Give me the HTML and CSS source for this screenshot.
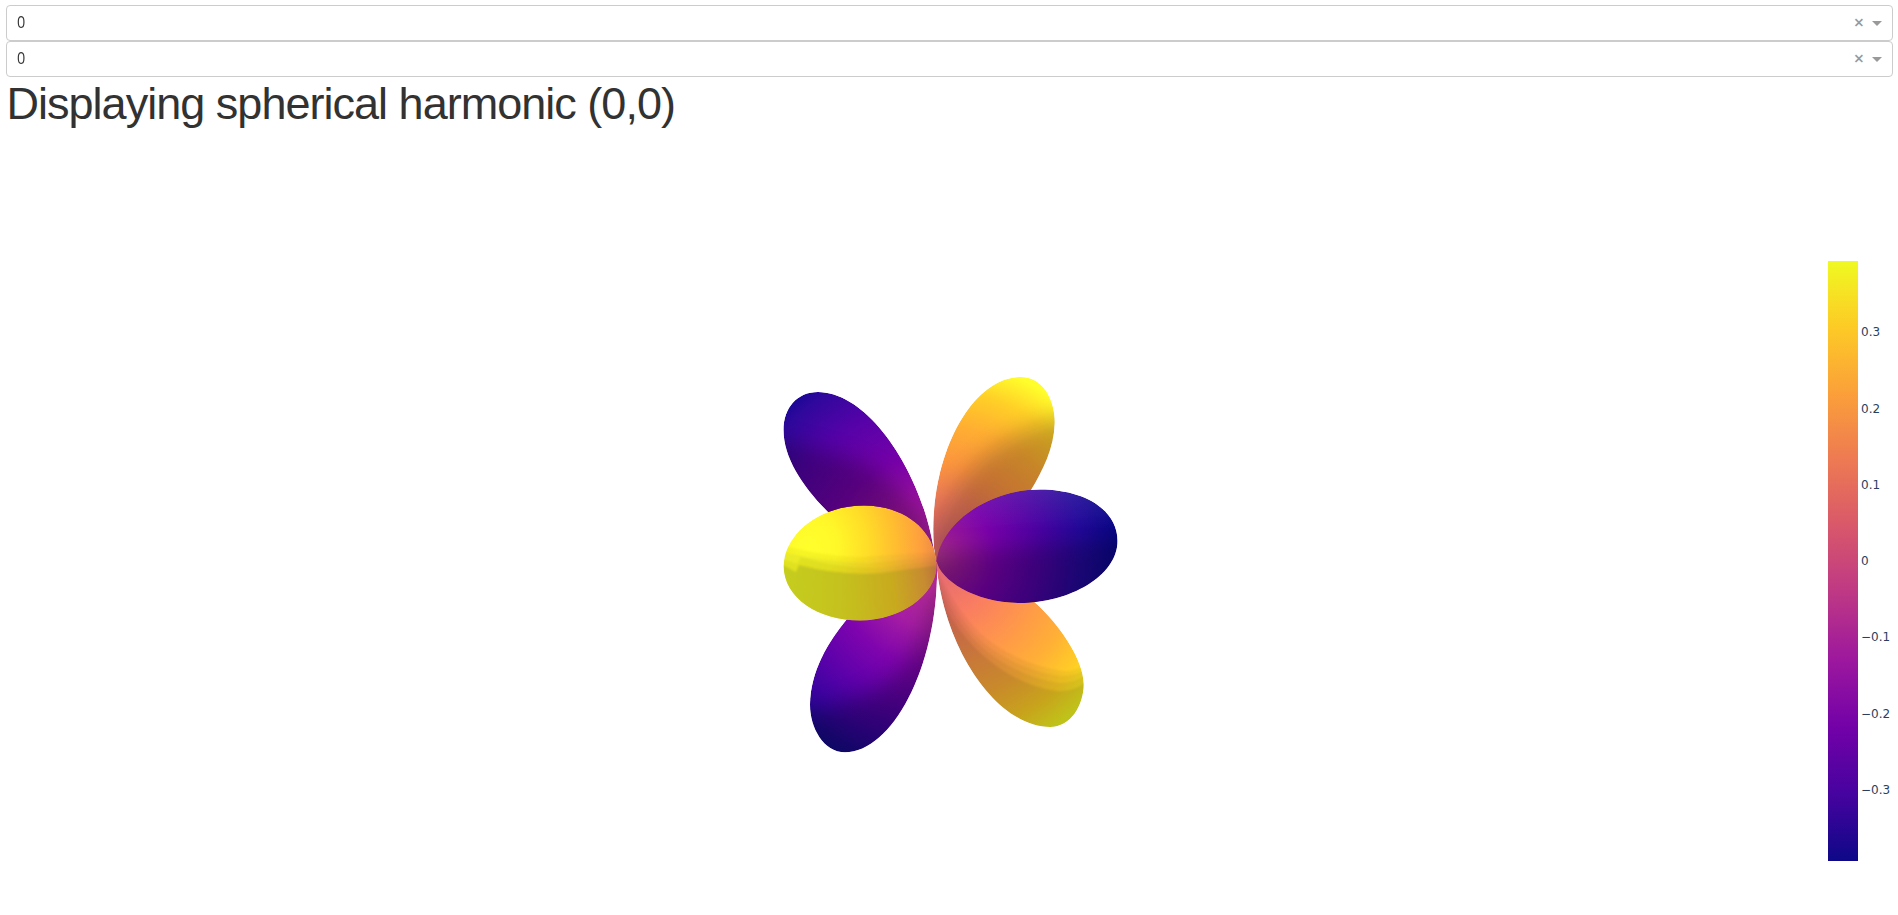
FILE: index.html
```html
<!DOCTYPE html>
<html lang="en">
<head>
<meta charset="utf-8">
<title>Spherical harmonics</title>
<link rel="stylesheet" href="styles.css">
</head>
<body>
<div class="select"><span class="value">0</span><span class="clear">×</span><span class="arrow"></span></div>
<div class="select"><span class="value">0</span><span class="clear">×</span><span class="arrow"></span></div>
<h1 class="title">Displaying spherical harmonic (0,0)</h1>
<svg class="plot" viewBox="0 130 1898 785" width="1898" height="785">
  <defs>
    <linearGradient id="plasma" x1="0" y1="1" x2="0" y2="0">
      <stop offset="0" stop-color="#0d0887"/><stop offset=".1111" stop-color="#46039f"/><stop offset=".2222" stop-color="#7201a8"/><stop offset=".3333" stop-color="#9c179e"/><stop offset=".4444" stop-color="#bd3786"/><stop offset=".5556" stop-color="#d8576b"/><stop offset=".6667" stop-color="#ed7953"/><stop offset=".7778" stop-color="#fb9f3a"/><stop offset=".8889" stop-color="#fdca26"/><stop offset="1" stop-color="#f0f921"/>
    </linearGradient>
    <radialGradient id="gUL" gradientUnits="userSpaceOnUse" cx="936" cy="560" r="215">
      <stop offset=".1" stop-color="#a32098"/><stop offset=".3" stop-color="#9a10a2"/><stop offset=".5" stop-color="#7601a9"/><stop offset=".75" stop-color="#5302a8"/><stop offset=".93" stop-color="#2f089c"/><stop offset="1" stop-color="#180796"/>
    </radialGradient>
    <radialGradient id="gUR" gradientUnits="userSpaceOnUse" cx="936" cy="560" r="208">
      <stop offset=".1" stop-color="#d66568"/><stop offset=".3" stop-color="#ee7c58"/><stop offset=".46" stop-color="#fb943f"/><stop offset=".65" stop-color="#ffae32"/><stop offset=".82" stop-color="#ffd027"/><stop offset=".96" stop-color="#fffd2b"/>
    </radialGradient>
    <radialGradient id="gLR" gradientUnits="userSpaceOnUse" cx="936" cy="560" r="215">
      <stop offset=".08" stop-color="#e76c70"/><stop offset=".28" stop-color="#fa7e60"/><stop offset=".48" stop-color="#ff984a"/><stop offset=".66" stop-color="#ffb036"/><stop offset=".82" stop-color="#ffd024"/><stop offset=".95" stop-color="#f4f820"/>
    </radialGradient>
    <radialGradient id="gLL" gradientUnits="userSpaceOnUse" cx="936" cy="570" r="215">
      <stop offset=".1" stop-color="#b52a99"/><stop offset=".27" stop-color="#a51da3"/><stop offset=".46" stop-color="#7f04ae"/><stop offset=".64" stop-color="#5e01ab"/><stop offset=".8" stop-color="#3b03a0"/><stop offset=".95" stop-color="#150a8c"/>
    </radialGradient>
    <radialGradient id="gR" gradientUnits="userSpaceOnUse" cx="936" cy="555" r="183">
      <stop offset="0" stop-color="#a8308a"/><stop offset=".13" stop-color="#981898"/><stop offset=".32" stop-color="#7801ab"/><stop offset=".57" stop-color="#4c02a3"/><stop offset=".8" stop-color="#22089a"/><stop offset="1" stop-color="#080687"/>
    </radialGradient>
    <radialGradient id="gY" gradientUnits="userSpaceOnUse" cx="0" cy="0" r="135" gradientTransform="translate(808 548) scale(1 1.1)">
      <stop offset="0" stop-color="#ffff2c"/><stop offset=".22" stop-color="#fff829"/><stop offset=".45" stop-color="#ffdc28"/><stop offset=".65" stop-color="#ffbd30"/><stop offset=".84" stop-color="#fe9f3e"/><stop offset="1" stop-color="#e4814b"/>
    </radialGradient>
    <linearGradient id="yLow" gradientUnits="userSpaceOnUse" x1="784" y1="584" x2="937" y2="560">
      <stop offset="0" stop-color="#c2cc1b"/><stop offset=".4" stop-color="#c2bd1b"/><stop offset=".7" stop-color="#c6a81f"/><stop offset=".9" stop-color="#c48a30"/><stop offset="1" stop-color="#b5703a"/>
    </linearGradient>
    <linearGradient id="sheen" x1="0" y1="0" x2="0" y2="1"><stop offset="0" stop-color="#fff" stop-opacity=".1"/><stop offset=".35" stop-color="#fff" stop-opacity="0"/></linearGradient>
    <filter id="soft" x="-30%" y="-30%" width="160%" height="160%"><feGaussianBlur stdDeviation="11"/></filter>
    <filter id="fine" x="-20%" y="-20%" width="140%" height="140%"><feGaussianBlur stdDeviation="1.2"/></filter>

    <path id="pUL" d="M936 562 L933 545 C920 470 868 392 818 392 C797 392 783.500 408 783.500 430 C783.500 458 803 487 828 512 L880 550Z"/>
    <path id="pUR" d="M936 562 L934 548 C927 460 970 377 1021 377 C1043 377 1055 400 1054.700 423 C1054 448 1043 470 1031 490 L980 550Z"/>
    <path id="pLR" d="M936 562 C945 655 1000 727 1050 727 C1071 727 1083.700 705 1083.700 684 C1083.700 660 1060 625 1035 602.500 L990 560Z"/>
    <path id="pLL" d="M937 560 C940 663 893 752.300 845 752.300 C823 752.300 810 727 810 705 C810 672 828 642 847 619 L900 560Z"/>
    <path id="pR" d="M936.500 561 C940 526 985 489.500 1040 489.500 C1085 489.500 1117.500 510 1117.500 541 C1117.500 576 1069 603 1020 603 C975 603 940 580 936.500 561Z"/>
    <path id="pY" d="M936.500 566 C936.500 531 905 505.500 864 505.500 C818 505.500 783.700 535 783.700 566 C783.700 598 818 620.500 860 620.500 C900 620.500 936.500 595 936.500 566Z"/>
    <clipPath id="cUL"><use href="#pUL"/></clipPath><clipPath id="cUR"><use href="#pUR"/></clipPath><clipPath id="cLR"><use href="#pLR"/></clipPath>
    <clipPath id="cLL"><use href="#pLL"/></clipPath><clipPath id="cR"><use href="#pR"/></clipPath><clipPath id="cY"><use href="#pY"/></clipPath>
  </defs>

  <g clip-path="url(#cUL)">
    <use href="#pUL" fill="url(#gUL)"/>
    <path d="M740 432 Q830 448 870 467 Q910 490 940 550 L930 620 L740 600Z" opacity=".26" filter="url(#soft)"/>
  </g>
  <g clip-path="url(#cUR)">
    <use href="#pUR" fill="url(#gUR)"/>
    <path d="M1085 411 Q1010 428 975 465 Q950 490 928 545 L936 600 L1100 580Z" fill="#201008" opacity=".25" filter="url(#soft)"/>
  </g>
  <g clip-path="url(#cLL)">
    <use href="#pLL" fill="url(#gLL)"/>
    <path d="M770 716 Q860 706 895 676 Q924 645 936 590 L990 590 L960 790 L770 790Z" opacity=".27" filter="url(#soft)"/>
  </g>
  <g clip-path="url(#cLR)">
    <use href="#pLR" fill="url(#gLR)"/>
    <g fill="#181400" filter="url(#fine)">
      <path d="M934 565 Q962 620 987 639 Q1020 664 1062 671 Q1078 672 1095 658 V750 H920Z" opacity=".05"/>
      <path d="M933 567 Q958 622 985 644 Q1020 671 1062 676 Q1078 676 1095 664 V750 H920Z" opacity=".05"/>
      <path d="M932 570 Q954 624 984 649 Q1020 678 1060 683 Q1077 683 1095 669 V750 H920Z" opacity=".06"/>
      <path d="M932 575 Q948 625 984 656 Q1020 687 1058 691 Q1076 692 1095 676 V750 H920Z" opacity=".08"/>
    </g>
  </g>
  <g clip-path="url(#cR)">
    <use href="#pR" fill="url(#gR)"/>
    <use href="#pR" fill="url(#sheen)"/>
    <path d="M900 555 Q1010 548 1150 534 V650 H900Z" opacity=".25" filter="url(#soft)"/>
  </g>
  <g clip-path="url(#cY)">
    <use href="#pY" fill="url(#gY)"/>
    <g fill="url(#yLow)" filter="url(#fine)">
      <path d="M775 543 Q815 556 860 557 L940 552 V630 H775Z" opacity=".16"/>
      <path d="M775 550 Q820 562 870 563 L940 556 V630 H775Z" opacity=".2"/>
      <path d="M775 556 L797 564 L801 557 Q840 569 880 568 L940 560 V630 H775Z" opacity=".25"/>
      <path d="M775 561 L796 572 L799 565 Q840 576 880 573 L940 565 V630 H775Z" opacity=".9"/>
    </g>
  </g>

  <rect x="1828" y="261" width="30" height="600" fill="url(#plasma)"/>
  <g class="ticks">
    <text x="1861" y="336">0.3</text>
    <text x="1861" y="413">0.2</text>
    <text x="1861" y="489">0.1</text>
    <text x="1861" y="565">0</text>
    <text x="1861" y="641">−0.1</text>
    <text x="1861" y="718">−0.2</text>
    <text x="1861" y="794">−0.3</text>
  </g>
</svg>
</body>
</html>
```
FILE: styles.css
```css
body {
  margin: 0;
  padding-top: 5px;
  background: #fff;
  color: #323232;
  overflow: hidden;
}

.select {
  display: flex;
  align-items: center;
  box-sizing: border-box;
  height: 36px;
  margin: 0 5px 0 6px;
  padding: 0 10px;
  border: 1px solid #ccc;
  border-radius: 4px;
  font: 16px "Open Sans", sans-serif;
  color: #333;
}

.value {
  flex: 1;
  padding-bottom: 2px;
  font-size: 16px;
  line-height: 22px;
  transform: scaleX(.9);
  transform-origin: left;
}

.clear {
  margin-right: 8px;
  padding-bottom: 2px;
  font-size: 18px;
  font-weight: 600;
  line-height: 18px;
  color: #999;
}

.arrow {
  border: 5px solid transparent;
  border-top-color: #999;
  border-bottom-width: 0;
}

.title {
  height: 53px;
  margin: 0 0 0 6.5px;
  font: 45px/54px "Liberation Sans", Arial, sans-serif;
  letter-spacing: -.98px;
  white-space: nowrap;
}

.plot {
  display: block;
}

.ticks {
  font: 12px "DejaVu Sans", sans-serif;
  fill: #2a3f5f;
}
```
